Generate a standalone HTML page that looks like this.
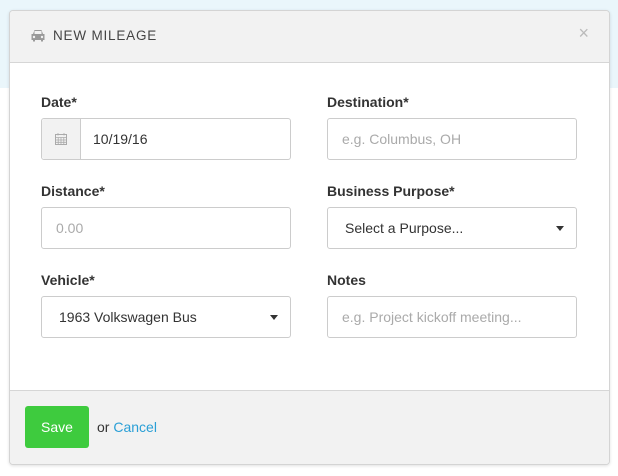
<!DOCTYPE html>
<html><head><style>
body{margin:0;width:618px;height:476px;background:#fff;font-family:"Liberation Sans",sans-serif;position:relative;overflow:hidden}
.bg{position:absolute;left:0;top:0;width:618px;height:88px;background:#eaf6fb}
.modal{position:absolute;left:9px;top:10px;width:599px;height:453px;background:#fff;border:1px solid #d4d4d4;border-radius:4px;box-shadow:0 1px 3px rgba(0,0,0,.12);overflow:hidden}
.hd{height:51px;background:#f2f2f2;border-bottom:1px solid #d6d6d6;position:relative}
.hd .t{position:absolute;left:43px;top:17px;font-size:13.5px;letter-spacing:.8px;color:#444}
.hd .x{position:absolute;right:20px;top:12px;font-size:18px;color:#bbb}
.lbl{position:absolute;font-size:14px;font-weight:bold;color:#333}
.in{position:absolute;width:250px;height:42px;border:1px solid #ccc;border-radius:3px;box-sizing:border-box;font-size:14px;line-height:40px;padding-left:14px;color:#333}
.ph{color:#aaa}
.caret{position:absolute;right:12px;top:18px;border-left:4px solid transparent;border-right:4px solid transparent;border-top:5px solid #333}
.ft{position:absolute;left:0;top:379px;width:100%;height:74px;background:#f2f2f2;border-top:1px solid #d6d6d6}
.save{position:absolute;left:15px;top:15px;width:64px;height:42px;background:#3ecb3e;border-radius:3px;color:#fff;font-size:14px;line-height:42px;text-align:center}
</style></head><body>
<div class="bg"></div>
<div class="modal">
<div class="hd">
<svg style="position:absolute;left:20px;top:18px" width="16" height="13" viewBox="0 0 16 13"><path d="M3 5 L4.5 1 H11.5 L13 5 H14.5 V11 H13 V12.5 H11 V11 H5 V12.5 H3 V11 H1.5 V5 Z" fill="#999"/><rect x="4.5" y="2" width="7" height="3" fill="#f2f2f2"/><circle cx="4" cy="8" r="1.2" fill="#f2f2f2"/><circle cx="12" cy="8" r="1.2" fill="#f2f2f2"/></svg>
<div class="t">NEW MILEAGE</div><div class="x">×</div>
</div>
<div class="lbl" style="left:31px;top:83px">Date*</div>
<div class="lbl" style="left:317px;top:83px">Destination*</div>
<div class="in" style="left:31px;top:107px;padding-left:0">
<div style="position:absolute;left:0;top:0;width:38px;height:40px;background:#f2f2f2;border-right:1px solid #ccc;border-radius:3px 0 0 3px"></div>
<svg style="position:absolute;left:13px;top:14px" width="12" height="12" viewBox="0 0 12 12"><rect x="0.5" y="1.5" width="11" height="10" fill="none" stroke="#aaa"/><path d="M0.5 4.5H11.5M0.5 7H11.5M0.5 9.3H11.5M3.2 4.5V11.5M6 4.5V11.5M8.8 4.5V11.5M3 0V2.5M9 0V2.5" stroke="#aaa" stroke-width="0.8"/></svg>
<span style="position:absolute;left:51px">10/19/16</span></div>
<div class="in ph" style="left:317px;top:107px">e.g. Columbus, OH</div>
<div class="lbl" style="left:31px;top:172px">Distance*</div>
<div class="lbl" style="left:317px;top:172px">Business Purpose*</div>
<div class="in ph" style="left:31px;top:196px">0.00</div>
<div class="in" style="left:317px;top:196px;padding-left:17px">Select a Purpose...<div class="caret"></div></div>
<div class="lbl" style="left:31px;top:261px">Vehicle*</div>
<div class="lbl" style="left:317px;top:261px">Notes</div>
<div class="in" style="left:31px;top:285px;padding-left:17px">1963 Volkswagen Bus<div class="caret"></div></div>
<div class="in ph" style="left:317px;top:285px">e.g. Project kickoff meeting...</div>
<div class="ft"><div class="save">Save</div>
<div style="position:absolute;left:87px;top:28px;font-size:14px;color:#333">or <span style="color:#2a9fd6">Cancel</span></div></div>
</div>
</body></html>
